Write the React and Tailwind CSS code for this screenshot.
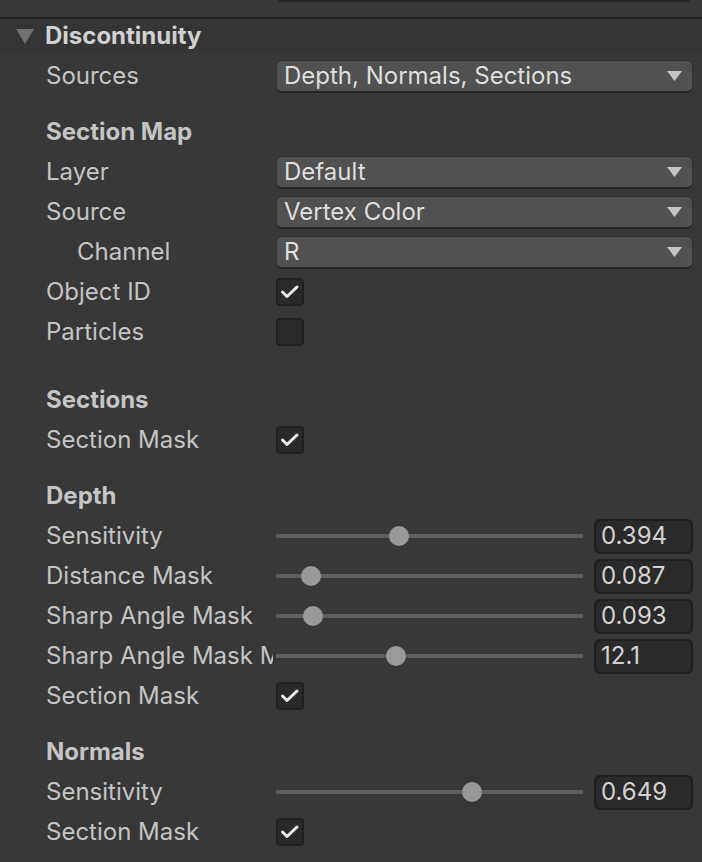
import React from "react";

const font = { fontFamily: "Inter, 'Noto Sans', sans-serif" };

function Check() {
  return (
    <div className="w-[28px] h-[28px] rounded-[4px] bg-[#2a2a2a] border-2 border-[#212121] flex items-center justify-center">
      <svg width="20" height="16" viewBox="0 0 20 16">
        <polyline points="2.5,8 7,12.5 17,3" fill="none" stroke="#eeeeee" strokeWidth="3" strokeLinecap="round" strokeLinejoin="round" />
      </svg>
    </div>
  );
}

function EmptyBox() {
  return <div className="w-[28px] h-[28px] rounded-[4px] bg-[#2a2a2a] border-2 border-[#212121]" />;
}

function Dropdown({ value }) {
  return (
    <div className="flex-1 h-[33px] rounded-[6px] bg-[#515151] border border-[#303030] border-b-2 border-b-[#252525] flex items-center justify-between pl-[7px] pr-[10px]">
      <span className="text-[24px] text-[#dedede] leading-[30px]">{value}</span>
      <svg width="15" height="10" viewBox="0 0 15 10">
        <polygon points="0,0 15,0 7.5,10" fill="#c4c4c4" />
      </svg>
    </div>
  );
}

function Slider({ value, frac }) {
  return (
    <div className="flex-1 flex items-center">
      <div className="relative w-[307px] h-[20px] flex items-center">
        <div className="w-full h-[4px] bg-[#5e5e5e]" />
        <div
          className="absolute top-0 w-[20px] h-[20px] rounded-full bg-[#999999]"
          style={{ left: `${frac * 287}px` }}
        />
      </div>
      <div className="ml-[11px] w-[99px] h-[35px] rounded-[6px] bg-[#2a2a2a] border-2 border-[#1f1f1f] flex items-center pl-[5px]">
        <span className="text-[24px] text-[#d2d2d2] leading-[30px]">{value}</span>
      </div>
    </div>
  );
}

function Row({ label, indent, children }) {
  return (
    <div className="h-[40px] flex items-center pl-[46px] pr-[9px]">
      <div className={`w-[227px] mr-[3px] overflow-hidden whitespace-nowrap text-[24px] text-[#c4c4c4] leading-[32px] ${indent ? "pl-[31px]" : ""}`}>
        {label}
      </div>
      <div className="flex-1 flex items-center">{children}</div>
    </div>
  );
}

function SubHeader({ children, className }) {
  return (
    <div className={`h-[40px] flex items-center pl-[46px] text-[24px] font-bold text-[#c4c4c4] leading-[32px] ${className || ""}`}>
      {children}
    </div>
  );
}

export default function App() {
  return (
    <div className="w-[702px] h-[862px] bg-[#383838] overflow-hidden" style={font}>
      <div className="h-[17px]">
        <div className="ml-[278px] w-[412px] h-[2px] bg-[#262626] rounded-b-[3px]" />
      </div>
      <div className="h-[2px] bg-[#232323]" />
      <div className="h-[34px] bg-[#353535] flex items-center">
        <svg className="ml-[16px]" width="18" height="15" viewBox="0 0 18 15">
          <polygon points="0,0 18,0 9,15" fill="#717171" />
        </svg>
        <span className="ml-[11px] text-[24px] font-bold text-[#d0d0d0] leading-[30px]">Discontinuity</span>
      </div>
      <div className="h-[3px]" />
      <Row label="Sources"><Dropdown value="Depth, Normals, Sections" /></Row>

      <SubHeader className="mt-[16px]">Section Map</SubHeader>
      <Row label="Layer"><Dropdown value="Default" /></Row>
      <Row label="Source"><Dropdown value="Vertex Color" /></Row>
      <Row label="Channel" indent><Dropdown value="R" /></Row>
      <Row label="Object ID"><Check /></Row>
      <Row label="Particles"><EmptyBox /></Row>

      <SubHeader className="mt-[28px]">Sections</SubHeader>
      <Row label="Section Mask"><Check /></Row>

      <SubHeader className="mt-[16px]">Depth</SubHeader>
      <Row label="Sensitivity"><Slider value="0.394" frac={0.394} /></Row>
      <Row label="Distance Mask"><Slider value="0.087" frac={0.087} /></Row>
      <Row label="Sharp Angle Mask"><Slider value="0.093" frac={0.093} /></Row>
      <Row label="Sharp Angle Mask Max"><Slider value="12.1" frac={0.382} /></Row>
      <Row label="Section Mask"><Check /></Row>

      <SubHeader className="mt-[16px]">Normals</SubHeader>
      <Row label="Sensitivity"><Slider value="0.649" frac={0.649} /></Row>
      <Row label="Section Mask"><Check /></Row>
    </div>
  );
}
